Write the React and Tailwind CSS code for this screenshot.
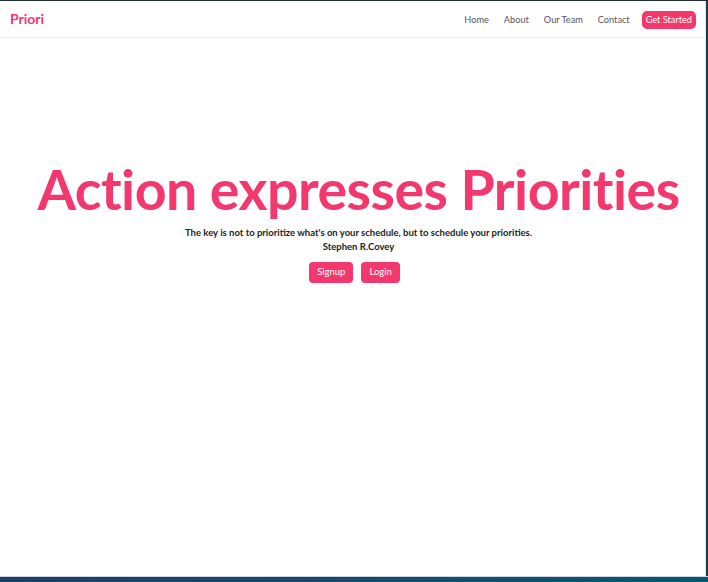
export default function App() {
  return (
    <div className="h-[582px] w-[708px] flex flex-col bg-[#0e4a6a] overflow-hidden" style={{ fontFamily: "Lato, 'Noto Sans', sans-serif" }}>
      <div className="h-px bg-[#1f2b37]" />
      <div className="flex flex-1 min-h-0">
        <div className="flex-1 bg-white flex flex-col">
          <nav className="h-[37px] flex items-center justify-between pl-[10px] pr-[9px] border-b border-[#f1f1f1]">
            <span className="text-[14px] font-bold text-[#f2386c] leading-none">Priori</span>
            <div className="flex items-center gap-[15px] text-[9.2px] text-[#555] pt-[2px]">
              <a>Home</a>
              <a>About</a>
              <a>Our Team</a>
              <a>Contact</a>
              <a className="ml-[-3px] bg-[#f2386c] text-white rounded-[5px] px-[4px] h-[18px] flex items-center">Get Started</a>
            </div>
          </nav>
          <div className="flex flex-col items-center pt-[121px] pl-[12px]">
            <h1 className="text-[55.5px] leading-[60px] font-bold text-[#f2386c] tracking-[-0.5px]">Action expresses Priorities</h1>
            <p className="mt-[7px] text-[9.5px] font-bold text-[#222] leading-[14px]">The key is not to prioritize what's on your schedule, but to schedule your priorities.</p>
            <p className="text-[9.5px] font-bold text-[#222] leading-[14px]">Stephen R.Covey</p>
            <div className="flex gap-[8px] mt-[8px] pr-[8px]">
              <button className="h-[21px] px-[8px] rounded-[4px] bg-[#f2386c] text-white text-[9.5px]">Signup</button>
              <button className="h-[21px] px-[8px] rounded-[4px] bg-[#f2386c] text-white text-[9.5px]">Login</button>
            </div>
          </div>
        </div>
        <div className="w-px bg-[#dfe6ec]" />
        <div className="w-[2px] bg-[#1c3a52]" />
      </div>
      <div className="h-px bg-[#c9d6e0]" />
      <div className="h-[5px] bg-gradient-to-r from-[#1d4068] to-[#0b5470]" />
    </div>
  );
}
